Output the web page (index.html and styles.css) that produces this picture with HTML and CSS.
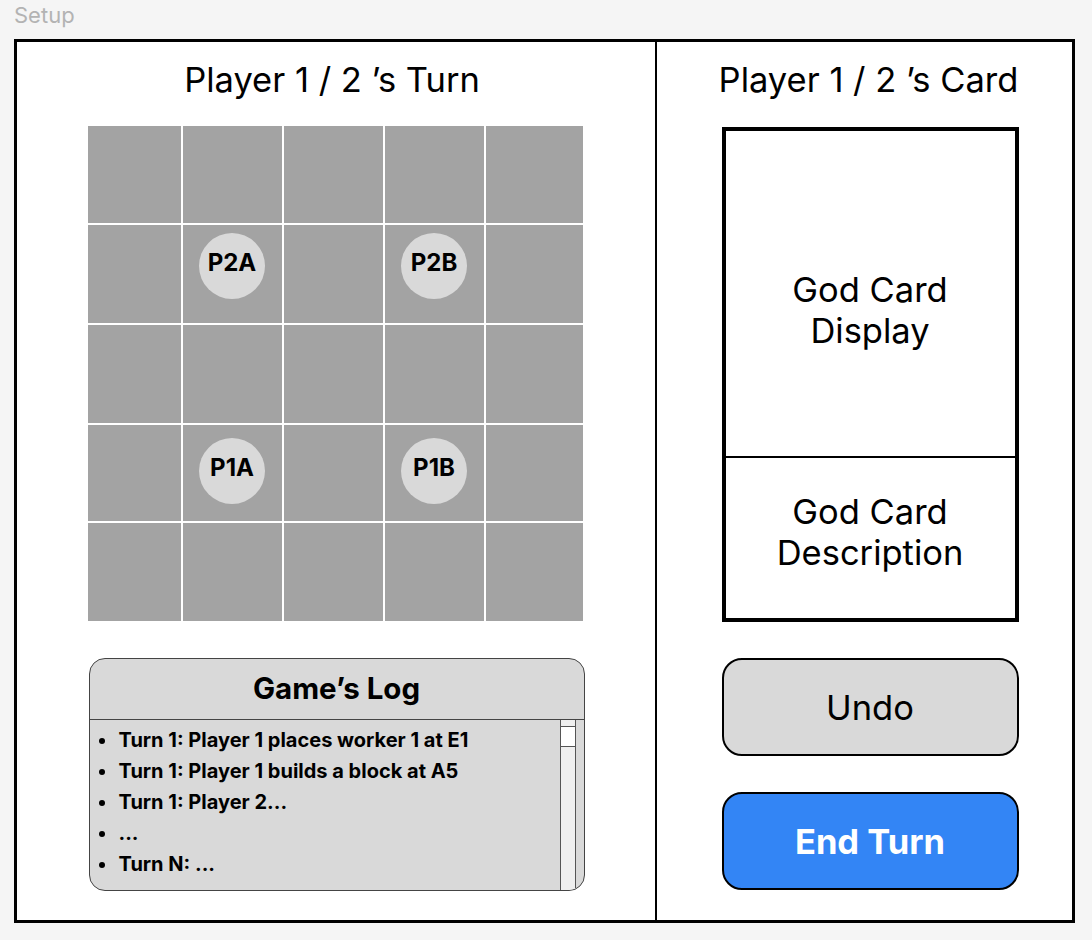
FILE: index.html
```html
<!DOCTYPE html>
<html lang="en">
<head>
<meta charset="utf-8">
<title>Setup</title>
<link rel="stylesheet" href="styles.css">
</head>
<body>
<div class="page">
  <div class="label">Setup</div>
  <div class="frame">
    <section class="left">
      <h1 class="title">Player 1 / 2 ’s Turn</h1>
      <div class="board">
        <div class="cell"></div><div class="cell"></div><div class="cell"></div><div class="cell"></div><div class="cell"></div>
        <div class="cell row2"></div><div class="cell row2"><div class="piece">P2A</div></div><div class="cell row2"></div><div class="cell row2"><div class="piece">P2B</div></div><div class="cell row2"></div>
        <div class="cell"></div><div class="cell"></div><div class="cell"></div><div class="cell"></div><div class="cell"></div>
        <div class="cell row4"></div><div class="cell row4"><div class="piece">P1A</div></div><div class="cell row4"></div><div class="cell row4"><div class="piece">P1B</div></div><div class="cell row4"></div>
        <div class="cell"></div><div class="cell"></div><div class="cell"></div><div class="cell"></div><div class="cell"></div>
      </div>
      <div class="log">
        <div class="log-head">Game’s Log</div>
        <div class="log-body">
          <ul class="log-list">
            <li>Turn 1: Player 1 places worker 1 at E1</li>
            <li>Turn 1: Player 1 builds a block at A5</li>
            <li>Turn 1: Player 2...</li>
            <li>...</li>
            <li>Turn N: ...</li>
          </ul>
          <div class="scrollbar">
            <div class="scroll-cap"></div>
            <div class="scroll-thumb"></div>
          </div>
        </div>
      </div>
    </section>
    <section class="right">
      <h1 class="title">Player 1 / 2 ’s Card</h1>
      <div class="card">
        <div class="card-display">God Card<br>Display</div>
        <div class="card-desc">God Card<br>Description</div>
      </div>
      <button class="btn undo">Undo</button>
      <button class="btn end">End Turn</button>
    </section>
  </div>
</div>
</body>
</html>
```
FILE: styles.css
```css
* { box-sizing: border-box; }
html, body { margin: 0; padding: 0; }
body {
  background: #f5f5f5;
  font-family: Inter, "Noto Sans", "Liberation Sans", sans-serif;
  color: #000;
}
.page {
  padding: 0 17px 0 14px;
  width: 1092px;
}
.label {
  height: 39px;
  font-size: 22px;
  line-height: 30px;
  color: #b3b3b3;
}
.frame {
  width: 1061px;
  height: 884px;
  border: 3px solid #000;
  background: #fff;
  display: flex;
}
.left {
  width: 640px;
  border-right: 2px solid #000;
  display: flex;
  flex-direction: column;
  align-items: center;
  padding-top: 18px;
}
.title {
  margin: 0;
  font-size: 34.5px;
  font-weight: 400;
  line-height: 40px;
  text-align: center;
  white-space: nowrap;
}
.left .title { margin-right: 8px; }
.right .title { margin-right: 3px; }
.board {
  margin-top: 26px;
  margin-right: 2px;
  width: 495px;
  height: 495px;
  display: grid;
  grid-template-columns: 93px 99px 99px 99px 97px;
  grid-template-rows: 97px 98px 98px 96px 98px;
  gap: 2px;
}
.cell {
  background: #a3a3a3;
  display: flex;
  justify-content: center;
  align-items: flex-start;
}
.row2 { padding-top: 8px; }
.row4 { padding-top: 13px; }
.piece {
  width: 66px;
  height: 66px;
  border-radius: 50%;
  background: #d9d9d9;
  display: flex;
  align-items: center;
  justify-content: center;
  font-weight: 700;
  font-size: 24px;
  padding-bottom: 8px;
}
.log {
  margin-top: 37px;
  margin-left: 1px;
  width: 496px;
  height: 233px;
  background: #d9d9d9;
  border: 1px solid #444;
  border-radius: 16px;
  display: flex;
  flex-direction: column;
  overflow: hidden;
}
.log-head {
  height: 61px;
  border-bottom: 1px solid #444;
  font-size: 29.5px;
  font-weight: 700;
  text-align: center;
  line-height: 58px;
}
.log-body {
  flex: 1;
  display: flex;
  padding-right: 8px;
}
.log-list {
  flex: 1;
  list-style: none;
  margin: 0;
  padding: 5px 0 0 9px;
}
.log-list li {
  font-size: 20px;
  font-weight: 700;
  line-height: 31px;
  display: flex;
  align-items: center;
  white-space: nowrap;
}
.log-list li::before {
  content: "";
  width: 6px;
  height: 6px;
  border-radius: 50%;
  background: #000;
  margin-right: 14px;
  flex: none;
}
.scrollbar {
  width: 16px;
  background: #efefef;
  border-left: 1px solid #555;
  border-right: 1px solid #555;
  display: flex;
  flex-direction: column;
}
.scroll-cap {
  height: 7px;
  border-bottom: 1px solid #555;
}
.scroll-thumb {
  height: 20px;
  background: #fff;
  border-bottom: 1px solid #555;
}
.right {
  flex: 1;
  display: flex;
  flex-direction: column;
  align-items: center;
  padding-top: 18px;
  padding-left: 11px;
}
.card {
  margin-top: 27px;
  width: 297px;
  height: 495px;
  border: 4px solid #000;
  display: flex;
  flex-direction: column;
}
.card-display {
  height: 327px;
  border-bottom: 2px solid #000;
  display: flex;
  align-items: center;
  justify-content: center;
  text-align: center;
  font-size: 34.5px;
  line-height: 41px;
  padding-top: 33px;
}
.card-desc {
  flex: 1;
  display: flex;
  align-items: center;
  justify-content: center;
  text-align: center;
  font-size: 34.5px;
  line-height: 41px;
  padding-bottom: 12px;
}
.btn {
  width: 297px;
  height: 98px;
  border: 2px solid #000;
  border-radius: 20px;
  font-family: inherit;
  font-size: 34.5px;
  padding: 0;
}
.undo {
  margin-top: 36px;
  background: #d9d9d9;
  color: #000;
  font-weight: 400;
}
.end {
  margin-top: 36px;
  background: #3385f5;
  color: #fff;
  font-weight: 700;
}
```
